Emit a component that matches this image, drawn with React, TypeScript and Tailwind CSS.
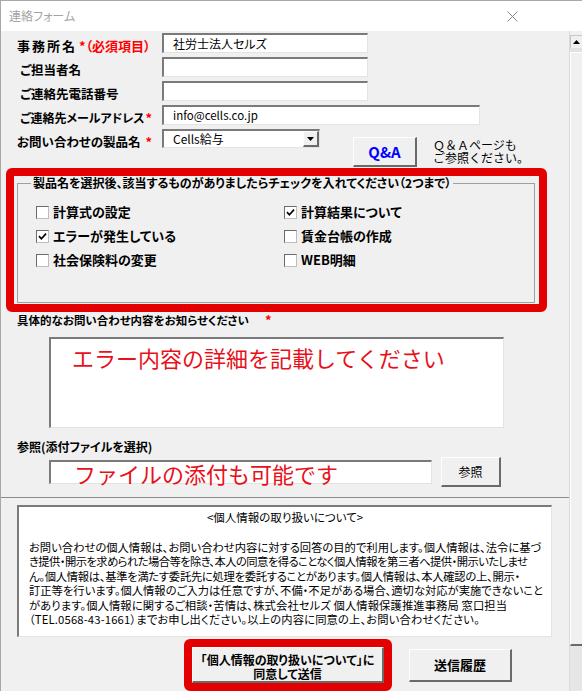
import React from "react";

const sunken =
  "bg-white border-t-2 border-l-2 border-b border-r border-t-[#7a7a7a] border-l-[#7a7a7a] border-b-[#e3e3e3] border-r-[#e3e3e3]";
const raised =
  "bg-[#f0f0f0] border-t border-l border-b-2 border-r-2 border-t-[#fdfdfd] border-l-[#fdfdfd] border-b-[#6a6a6a] border-r-[#6a6a6a]";

function Check({ checked, label }: { checked?: boolean; label: string }) {
  return (
    <div className="flex items-center h-[24px]">
      <span className="w-[13px] h-[13px] shrink-0 bg-white border border-t-[#6b6b6b] border-l-[#6b6b6b] border-b-[#bdbdbd] border-r-[#bdbdbd] flex items-center justify-center">
        {checked && (
          <svg width="9" height="9" viewBox="0 0 9 9">
            <path d="M1 4.2 L3.4 6.8 L8 1.6" stroke="#000" strokeWidth="1.7" fill="none" />
          </svg>
        )}
      </span>
      <span className="ml-[4px] text-[13px] font-bold leading-[16px] whitespace-nowrap">{label}</span>
    </div>
  );
}

function Star() {
  return <span className="text-[#ff0000] font-bold text-[13px]">*</span>;
}

const privacy: { t: string; c: string }[] = [
  { t: "お問い合わせの個人情報は、お問い合わせ内容に対する回答の目的で利用します。個人情報は、法令に基づ", c: "" },
  { t: "き提供・開示を求められた場合等を除き、本人の同意を得ることなく個人情報を第三者へ提供・開示いたしませ", c: "tracking-[-0.55px]" },
  { t: "ん。個人情報は、基準を満たす委託先に処理を委託することがあります。個人情報は、本人確認の上、開示・", c: "tracking-[-0.27px]" },
  { t: "訂正等を行います。個人情報のご入力は任意ですが、不備・不足がある場合、適切な対応が実施できないこと", c: "" },
  { t: "があります。個人情報に関するご相談・苦情は、株式会社セルズ 個人情報保護推進事務局 窓口担当", c: "tracking-[0.1px]" },
  { t: "（TEL.0568-43-1661）までお申し出ください。以上の内容に同意の上、お問い合わせください。", c: "tracking-[0.15px]" },
];

export default function App() {
  return (
    <div className="w-[582px] h-[691px] overflow-hidden bg-[#f0f0f0] flex flex-col font-['Noto_Sans_CJK_JP','Noto_Sans',sans-serif] [font-feature-settings:'palt'] text-black">
      {/* title bar */}
      <div className="h-[31px] shrink-0 bg-white border-t border-l border-[#a8a8a8] flex items-center justify-between pl-[8px] pr-[64px]">
        <span className="text-[12px] text-[#a3a3a3] leading-[14px]">連絡フォーム</span>
        <svg width="11" height="11" viewBox="0 0 11 11">
          <path d="M0.5 0.5 L10.5 10.5 M10.5 0.5 L0.5 10.5" stroke="#8a8a8a" strokeWidth="1" />
        </svg>
      </div>

      <div className="flex flex-1 min-h-0 border-l border-[#a8a8a8]">
        <main className="w-[568px] shrink-0 flex flex-col">
          {/* form rows */}
          <div className="pt-[2px] flex flex-col gap-[4px]">
            <div className="flex items-start pl-[16px] h-[20px]">
              <div className="w-[145px] mt-[3px] leading-[20px] text-[13px] font-bold whitespace-nowrap">
                <span className="tracking-[2px]">事務所名</span>
                <span className="ml-[2px] text-[#ff0000]">*（必須項目）</span>
              </div>
              <div className={sunken + " w-[206px] h-[20px] flex items-center pl-[9px] text-[12px]"}>社労士法人セルズ</div>
            </div>
            <div className="flex items-start pl-[16px] h-[20px]">
              <div className="w-[145px] mt-[3px] leading-[20px] text-[12.5px] font-bold pl-[3px] whitespace-nowrap">ご担当者名</div>
              <div className={sunken + " w-[206px] h-[20px]"} />
            </div>
            <div className="flex items-start pl-[16px] h-[20px]">
              <div className="w-[145px] mt-[3px] leading-[20px] text-[12.5px] font-bold pl-[3px] whitespace-nowrap">ご連絡先電話番号</div>
              <div className={sunken + " w-[206px] h-[20px]"} />
            </div>
            <div className="flex items-start pl-[16px] h-[20px]">
              <div className="w-[145px] mt-[3px] leading-[20px] text-[12px] font-bold pl-[3px] flex pr-[10px] whitespace-nowrap">
                <span>ご連絡先メールアドレス</span>
                <span className="ml-auto">
                  <Star />
                </span>
              </div>
              <div className={sunken + " w-[318px] h-[20px] flex items-center pl-[9px] text-[11.5px]"}>info@cells.co.jp</div>
            </div>
            <div className="flex items-start pl-[16px] h-[39px]">
              <div className="w-[145px] mt-[3px] leading-[20px] text-[12.5px] font-bold flex pr-[10px] whitespace-nowrap">
                <span>お問い合わせの製品名</span>
                <span className="ml-auto">
                  <Star />
                </span>
              </div>
              <div className={sunken + " w-[158px] h-[19px] flex items-center"}>
                <span className="pl-[9px] text-[12px] flex-1">Cells給与</span>
                <span className={raised + " w-[16px] h-full flex items-center justify-center"}>
                  <svg width="7" height="4" viewBox="0 0 7 4">
                    <path d="M0 0 H7 L3.5 4 Z" fill="#000" />
                  </svg>
                </span>
              </div>
              <button className={raised + " ml-[33px] mt-[8px] w-[64px] h-[30px] text-[15px] font-bold text-[#0000ff] leading-none"}>
                Q&amp;A
              </button>
              <div className="ml-[16px] mt-[9px] text-[12px] leading-[13px] [font-feature-settings:normal] whitespace-nowrap">
                Ｑ＆Ａページも
                <br />
                ご参照ください。
              </div>
            </div>
          </div>

          {/* red highlighted checkbox group */}
          <div className="ml-[5px] w-[541px] h-[144px] border-[8px] border-[#e30000] rounded-[6px]">
            <fieldset className="ml-[3px] mr-[4px] h-[127px] border border-[#a0a0a0] min-w-0">
              <legend className="ml-[13px] px-[2px] text-[12px] font-bold leading-[14px] whitespace-nowrap">
                製品名を選択後、該当するものがありましたらチェックを入れてください（2つまで）
              </legend>
              <div className="grid grid-cols-[248px_1fr] pl-[18px] pt-[10px]">
                <div className="flex flex-col">
                  <Check label="計算式の設定" />
                  <Check label="エラーが発生している" checked />
                  <Check label="社会保険料の変更" />
                </div>
                <div className="flex flex-col">
                  <Check label="計算結果について" checked />
                  <Check label="賃金台帳の作成" />
                  <Check label="WEB明細" />
                </div>
              </div>
            </fieldset>
          </div>

          {/* details */}
          <div className="pl-[16px] text-[11.5px] font-bold leading-[16px] whitespace-nowrap">
            具体的なお問い合わせ内容をお知らせください<span className="ml-[16px]"><Star /></span>
          </div>
          <div className={sunken + " ml-[48px] mt-[9px] w-[455px] h-[91px] pl-[21px] pt-[3px]"}>
            <div className="text-[22px] leading-[30px] text-[#e8101a] [font-feature-settings:normal] whitespace-nowrap">
              エラー内容の詳細を記載してください
            </div>
          </div>

          <div className="pl-[16px] mt-[11px] text-[12px] font-bold leading-[16px]">参照(添付ファイルを選択)</div>
          <div className="flex items-center mt-[2px] pl-[48px] h-[30px]">
            <div className={sunken + " w-[383px] h-[24px] pl-[23px] flex items-center"}>
              <span className="text-[22px] leading-[22px] text-[#e8101a] [font-feature-settings:normal] whitespace-nowrap">
                ファイルの添付も可能です
              </span>
            </div>
            <button className={raised + " ml-[9px] w-[60px] h-[30px] text-[12px]"}>参照</button>
          </div>

          <div className="mt-[10px] h-px bg-[#8c8c8c]" />

          {/* privacy */}
          <div className={sunken + " ml-[16px] mt-[7px] w-[535px] h-[132px] pl-[10px] pt-[3px] text-[11.3px]"}>
            <div className="text-center leading-[14px] pr-[10px] text-[11.5px]">&lt;個人情報の取り扱いについて&gt;</div>
            <div className="mt-[16px] leading-[14.4px]">
              {privacy.map((l, i) => (
                <div key={i} className={"whitespace-nowrap " + l.c}>
                  {l.t}
                </div>
              ))}
            </div>
          </div>

          {/* bottom buttons */}
          <div className="flex items-start mt-[2px] pl-[183px]">
            <div className="w-[208px] h-[52px] shrink-0 border-[8px] border-[#e30000] rounded-[6px]">
              <button className={raised + " w-full h-[36px] flex flex-col items-center pt-[5px] text-[12px] font-bold leading-[14px]"}>
                <span className="whitespace-nowrap">「個人情報の取り扱いについて」に</span>
                <span>同意して送信</span>
              </button>
            </div>
            <button className={raised + " ml-[17px] mt-[10px] w-[103px] h-[33px] text-[13px] font-bold"}>送信履歴</button>
          </div>
        </main>

        {/* scrollbar */}
        <div className="flex-1 flex flex-col border-l border-[#dadada] bg-[#f0f0f0]">
          <div className="h-[4px]" />
          <div className="h-[13px] flex items-center justify-center border-t border-l border-[#c8c8c8]">
            <svg width="7" height="4" viewBox="0 0 7 4">
              <path d="M0 4 H7 L3.5 0 Z" fill="#000" />
            </svg>
          </div>
          <div className="h-[4px] bg-[#e2e2e2]" />
          <div className="h-[594px] border-t border-l border-white border-b-2 border-b-[#6a6a6a] bg-[#f0f0f0]" />
          <div className="flex-1 bg-[#e6e6e6]" />
        </div>
      </div>
    </div>
  );
}
